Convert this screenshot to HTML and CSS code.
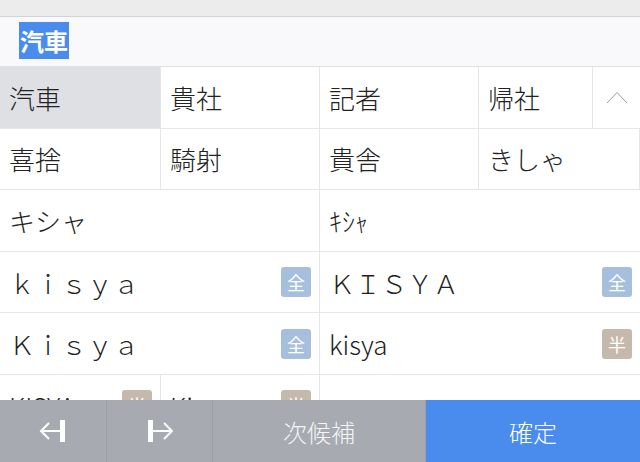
FILE: index.html
```html
<!DOCTYPE html>
<html lang="ja">

<head>
    <meta charset="UTF-8">
    <meta name="viewport" content="width=device-width, initial-scale=1.0">
    <title>変換候補</title>
    <link rel="stylesheet" href="styles.css">
</head>

<body>

    <div class="screen">
        <div class="topstrip"></div>

        <div class="inputbar">
            <span class="marked">汽車</span>
        </div>

        <div class="candidates">
            <div class="row">
                <div class="cell w161 selected">汽車</div>
                <div class="cell w159">貴社</div>
                <div class="cell w159">記者</div>
                <div class="cell w114">帰社</div>
                <div class="cell more">
                    <svg width="22" height="13" viewBox="0 0 22 13">
                        <polyline points="1,12 11,1.5 21,12" fill="none" stroke="#9a9a9f" stroke-width="1"/>
                    </svg>
                </div>
            </div>
            <div class="row">
                <div class="cell w161">喜捨</div>
                <div class="cell w159">騎射</div>
                <div class="cell w159">貴舎</div>
                <div class="cell grow">きしゃ</div>
            </div>
            <div class="row">
                <div class="cell half">キシャ</div>
                <div class="cell half last">ｷｼｬ</div>
            </div>
            <div class="row">
                <div class="cell half"><span>ｋｉｓｙａ</span><b class="badge zen">全</b></div>
                <div class="cell half last"><span>ＫＩＳＹＡ</span><b class="badge zen">全</b></div>
            </div>
            <div class="row">
                <div class="cell half"><span>Ｋｉｓｙａ</span><b class="badge zen">全</b></div>
                <div class="cell half last"><span>kisya</span><b class="badge han">半</b></div>
            </div>
            <div class="row">
                <div class="cell w161"><span>KISYA</span><b class="badge han">半</b></div>
                <div class="cell w159"><span>Kisya</span><b class="badge han">半</b></div>
                <div class="cell grow last"></div>
            </div>
        </div>

        <div class="toolbar">
            <button class="tool b107" type="button">
                <svg width="30" height="24" viewBox="0 0 30 24">
                    <rect x="22" y="1" width="5" height="22" fill="#fff"/>
                    <line x1="3" y1="12" x2="22" y2="12" stroke="#fff" stroke-width="2"/>
                    <polyline points="11,4 3,12 11,20" fill="none" stroke="#fff" stroke-width="2"/>
                </svg>
            </button>
            <button class="tool b106" type="button">
                <svg width="30" height="24" viewBox="0 0 30 24">
                    <rect x="3" y="1" width="5" height="22" fill="#fff"/>
                    <line x1="8" y1="12" x2="27" y2="12" stroke="#fff" stroke-width="2"/>
                    <polyline points="19,4 27,12 19,20" fill="none" stroke="#fff" stroke-width="2"/>
                </svg>
            </button>
            <button class="tool b213" type="button">次候補</button>
            <button class="tool confirm" type="button">確定</button>
        </div>
    </div>

</body>

</html>
```

FILE: styles.css
```css
body {
    margin: 0;
    font-family: "Noto Sans CJK JP", "Noto Sans", sans-serif;
    background-color: #ffffff;
}

.screen {
    width: 640px;
    height: 462px;
    overflow: hidden;
    display: flex;
    flex-direction: column;
}

.topstrip {
    height: 16px;
    background-color: #ececec;
    border-bottom: 1px solid #d3d3d6;
}

.inputbar {
    height: 49px;
    background-color: #f9f9fb;
    border-bottom: 1px solid #e2e2e6;
    display: flex;
    align-items: center;
    padding-left: 19px;
}

.marked {
    background-color: #4a8cee;
    color: #fff;
    font-weight: bold;
    font-size: 24px;
    line-height: 37px;
    height: 37px;
    padding: 0 1px;
    margin-top: -2px;
}

.candidates {
    height: 333px;
    overflow: hidden;
}

.row {
    display: flex;
    height: 61.6px;
    box-sizing: border-box;
    border-bottom: 1px solid #e6e6ea;
}

.cell {
    box-sizing: border-box;
    border-right: 1px solid #e6e6ea;
    display: flex;
    align-items: center;
    justify-content: space-between;
    padding: 0 8px 0 9px;
    font-size: 26px;
    font-weight: 300;
    color: #222;
    white-space: nowrap;
    overflow: hidden;
}

.cell.last {
    border-right: none;
}

.w161 { width: 161px; }
.w159 { width: 159px; }
.w114 { width: 114px; }
.grow { flex: 1; }
.half { width: 320px; }

.selected {
    background-color: #dfe0e4;
}

.more {
    flex: 1;
    border-right: none;
    justify-content: center;
    padding: 0;
}

.badge {
    width: 30px;
    height: 30px;
    border-radius: 3px;
    color: #fff;
    font-weight: normal;
    font-size: 18px;
    display: flex;
    align-items: center;
    justify-content: center;
    flex-shrink: 0;
}

.zen {
    background-color: #a6bfdc;
}

.han {
    background-color: #c5b9ab;
}

.toolbar {
    display: flex;
    height: 62px;
    background-color: #a7aab1;
}

.tool {
    border: none;
    border-right: 1px solid #9c9fa6;
    background-color: #a7aab1;
    color: #f4f5f7;
    font-family: "Noto Sans CJK JP", sans-serif;
    font-size: 24px;
    font-weight: 300;
    padding: 0;
    display: flex;
    align-items: center;
    justify-content: center;
}

.b107 { width: 107px; }
.b106 { width: 106px; }
.b213 { width: 213px; }

.confirm {
    flex: 1;
    border-right: none;
    background-color: #4a8cee;
    color: #fff;
}
```
